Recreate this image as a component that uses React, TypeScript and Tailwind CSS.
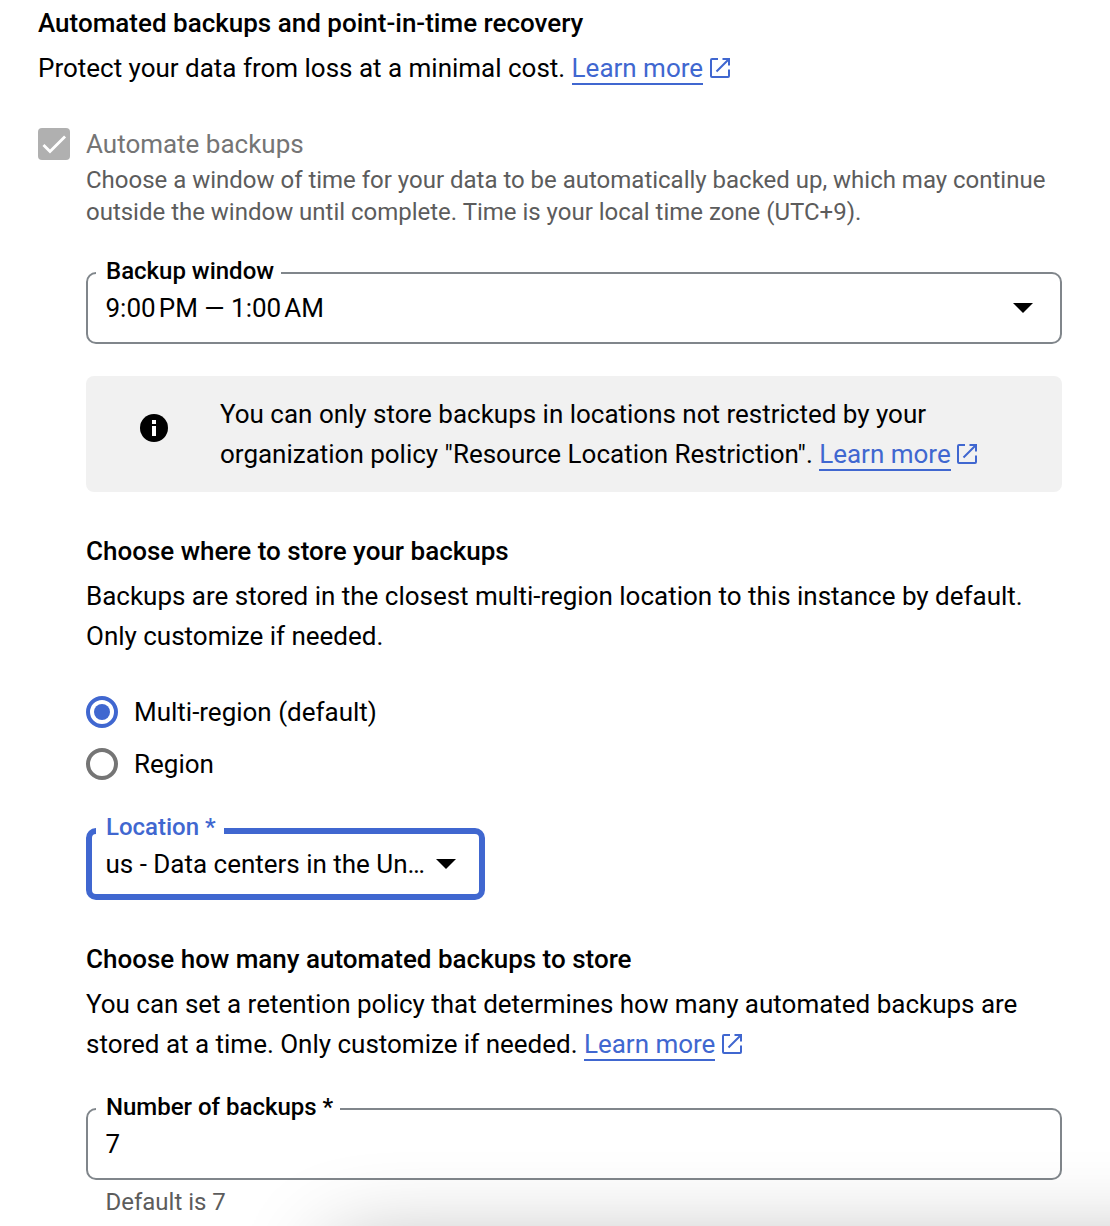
import React from 'react';

function LearnMore() {
  return (
    <a className="whitespace-nowrap text-[#4067d0]">
      <span className="inline-block h-[33px] border-b-2 border-[#4067d0] leading-[32px]">Learn more</span>
      <svg className="ml-[6.5px] inline-block align-[-1px]" width="20" height="20" viewBox="0 0 20 20" fill="none" stroke="currentColor" strokeWidth="2">
        <path d="M8 1H2a1 1 0 0 0-1 1v16a1 1 0 0 0 1 1h16a1 1 0 0 0 1-1v-6.500M12.500 1H19v6.500M19 1L6.500 13.500" />
      </svg>
    </a>
  );
}

function Caret() {
  return (
    <svg width="20" height="10" viewBox="0 0 20 10">
      <path d="M0 0h20L10 10z" fill="#000" />
    </svg>
  );
}

function Field({ label, children, caret, active }: { label: string; children: React.ReactNode; caret?: boolean; active?: boolean }) {
  return (
    <div
      className={
        active
          ? 'relative flex h-[72px] w-[399px] items-center justify-between rounded-[10px] border-[6px] border-[#4067d0] pr-[23px] pl-[13.5px]'
          : 'relative flex h-[72px] w-[976px] items-center justify-between rounded-[10px] border-2 border-[#80868b] pr-[27px] pl-[17.5px]'
      }
    >
      <span
        className={
          active
            ? 'absolute -top-[23px] left-[4px] bg-white pr-[8px] pl-[10px] text-2xl leading-[32px] font-medium whitespace-nowrap text-[#4067d0]'
            : 'absolute -top-[19px] left-[8px] bg-white pr-[7px] pl-[10px] text-2xl leading-[32px] font-medium whitespace-nowrap'
        }
      >
        {label}
      </span>
      <span className="whitespace-nowrap">{children}</span>
      {caret && <Caret />}
    </div>
  );
}

function Radio({ label, checked }: { label: string; checked?: boolean }) {
  return (
    <div className="flex h-8 items-center gap-4">
      <span
        className={
          checked
            ? 'flex size-8 items-center justify-center rounded-full border-4 border-[#4067d0]'
            : 'size-8 rounded-full border-4 border-[#757575]'
        }
      >
        {checked && <span className="size-4 rounded-full bg-[#4067d0]" />}
      </span>
      {label}
    </div>
  );
}

export default function App() {
  return (
    <div className="relative h-[1226px] w-[1110px] overflow-hidden bg-white pl-[38px] font-['Roboto',sans-serif] text-[26px] leading-[40px] tracking-[-0.01px] text-black">
      <h2 className="h-[48px] pt-[3px] font-medium tracking-normal">Automated backups and point-in-time recovery</h2>
      <p className="h-[80px] whitespace-nowrap">
        Protect your data from loss at a minimal cost. <LearnMore />
      </p>
      <div className="flex items-center gap-4 text-[#757575]">
        <span className="flex size-8 items-center justify-center rounded-[4px] bg-[#b0b0b0]">
          <svg width="32" height="32" viewBox="0 0 24 24" fill="none" stroke="#fff" strokeWidth="2.100">
            <path d="M4.100 12.700L9 17.600 20.300 6.300" />
          </svg>
        </span>
        <span className="leading-8">Automate backups</span>
      </div>
      <div className="pl-12">
        <p className="mt-1 text-2xl leading-8 whitespace-nowrap text-[#5c5c5c]">
          Choose a window of time for your data to be automatically backed up, which may continue
          <br />
          outside the window until complete. Time is your local time zone (UTC+9).
        </p>
        <div className="mt-11">
          <Field label="Backup window" caret>
            {'9:00\u202fPM — 1:00\u202fAM'}
          </Field>
        </div>
        <div className="mt-8 flex h-[116px] w-[976px] rounded-[8px] bg-[#f1f1f1] pt-[18px] pl-[54px]">
          <svg className="mt-5 mr-[52px] shrink-0" width="28" height="28" viewBox="0 0 28 28">
            <circle cx="14" cy="14" r="14" fill="#000" />
            <path d="M12 6h4v4h-4zM12 12h4v10h-4z" fill="#fff" />
          </svg>
          <p className="whitespace-nowrap">
            You can only store backups in locations not restricted by your
            <br />
            organization policy "Resource Location Restriction". <LearnMore />
          </p>
        </div>
        <h3 className="mt-[39px] font-medium tracking-normal">Choose where to store your backups</h3>
        <p className="mt-[5px] whitespace-nowrap">
          Backups are stored in the closest multi-region location to this instance by default.
          <br />
          Only customize if needed.
        </p>
        <div className="mt-10 flex flex-col gap-5">
          <Radio label="Multi-region (default)" checked />
          <Radio label="Region" />
        </div>
        <div className="mt-12">
          <Field label="Location *" caret active>
            us - Data centers in the Un…
          </Field>
        </div>
        <h3 className="mt-[39px] font-medium tracking-normal">Choose how many automated backups to store</h3>
        <p className="mt-[5px] h-20 whitespace-nowrap">
          You can set a retention policy that determines how many automated backups are
          <br />
          stored at a time. Only customize if needed. <LearnMore />
        </p>
        <div className="mt-11">
          <Field label="Number of backups *">7</Field>
        </div>
        <p className="mt-[6px] pl-[19.5px] text-2xl leading-8 text-[#5c5c5c]">Default is 7</p>
      </div>
      <div className="pointer-events-none absolute top-[1246px] left-[332px] h-[200px] w-[1000px] shadow-[0_0_90px_rgba(0,0,0,0.3)]" />
    </div>
  );
}
